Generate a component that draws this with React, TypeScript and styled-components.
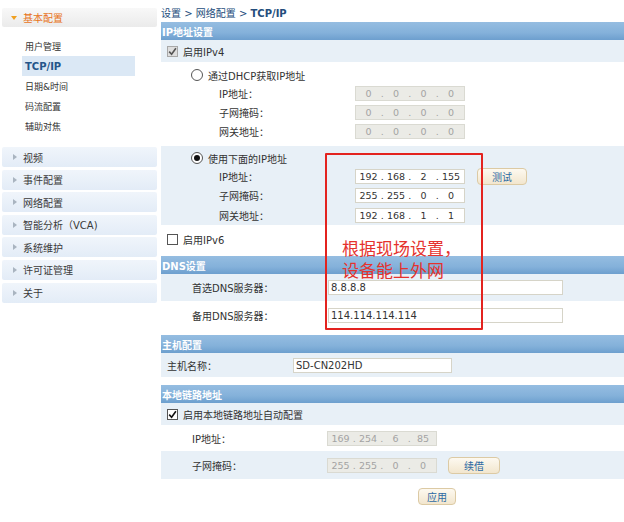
import React from "react";
import styled, { createGlobalStyle } from "styled-components";

const GlobalStyle = createGlobalStyle`
  html, body {
    margin: 0;
    padding: 0;
    background: #fff;
  }
  body {
    font-family: "DejaVu Sans", "Noto Sans CJK SC", sans-serif;
    font-size: 10px;
    color: #333;
  }
`;

const Page = styled.div`
  display: grid;
  grid-template-columns: 157px 463px;
  column-gap: 4px;
  width: 624px;
  height: 522px;
  overflow: hidden;
`;

/* ---------- sidebar ---------- */

const Sidebar = styled.div`
  display: flex;
  flex-direction: column;
  padding: 8px 0 0 2px;
`;

const Arrow = styled.span<{ open?: boolean }>`
  width: 0;
  height: 0;
  flex: none;
  ${({ open }) =>
    open
      ? `border-left: 3px solid transparent;
         border-right: 3px solid transparent;
         border-top: 4px solid #f0a020;
         margin-right: 6px;`
      : `border-top: 3px solid transparent;
         border-bottom: 3px solid transparent;
         border-left: 4px solid #a9b4c0;
         margin-right: 6px;`}
`;

const GroupHead = styled.div<{ open?: boolean }>`
  height: ${({ open }) => (open ? 19 : 20)}px;
  display: flex;
  align-items: center;
  box-sizing: border-box;
  padding-left: ${({ open }) => (open ? 9 : 11)}px;
  margin-bottom: ${({ open }) => (open ? 0 : 2.6)}px;
  border-radius: 2px;
  background: ${({ open }) =>
    open
      ? "linear-gradient(#f8f8f8, #ebebeb)"
      : "linear-gradient(#f0f5fb, #e3ecf7)"};
  color: ${({ open }) => (open ? "#e8731a" : "#3a3a3a")};
  font-size: 10px;
`;

const SubList = styled.div`
  display: flex;
  flex-direction: column;
  padding: 9px 0 11px 0;
`;

const SubItem = styled.div<{ active?: boolean }>`
  height: 20px;
  width: 113px;
  margin-left: 20px;
  padding-left: 3px;
  box-sizing: border-box;
  display: flex;
  align-items: center;
  font-size: ${({ active }) => (active ? 10 : 9)}px;
  font-weight: ${({ active }) => (active ? "bold" : "normal")};
  color: ${({ active }) => (active ? "#24558a" : "#333")};
  background: ${({ active }) => (active ? "#dbe8f5" : "transparent")};
`;

/* ---------- main ---------- */

const Main = styled.div`
  position: relative;
  display: flex;
  flex-direction: column;
`;

const Crumb = styled.div`
  height: 22px;
  box-sizing: border-box;
  padding-top: 5px;
  color: #244d7c;
  font-size: 10px;
  b {
    font-weight: bold;
  }
`;

const SectionHead = styled.div<{ gap?: number }>`
  height: 18px;
  margin-top: ${({ gap }) => gap || 0}px;
  padding-left: 1px;
  display: flex;
  align-items: center;
  color: #fff;
  font-weight: bold;
  font-size: 10px;
  background: linear-gradient(#95bde1 0%, #84b1da 60%, #6d9fce 100%);
`;

const Block = styled.div<{ tint?: boolean; pt?: number; pb?: number }>`
  display: flex;
  flex-direction: column;
  background: ${({ tint }) => (tint ? "#e8f0f7" : "#fff")};
  padding-top: ${({ pt }) => pt || 0}px;
  padding-bottom: ${({ pb }) => pb || 0}px;
`;

const Row = styled.div<{ h: number; pl: number; tint?: boolean }>`
  height: ${({ h }) => h}px;
  padding-left: ${({ pl }) => pl}px;
  display: flex;
  align-items: center;
  background: ${({ tint }) => (tint ? "#e8f0f7" : "transparent")};
`;

const Label = styled.span<{ w: number }>`
  width: ${({ w }) => w}px;
  flex: none;
  color: #333;
`;

const Check = styled.span<{ dim?: boolean }>`
  width: 11px;
  height: 11px;
  box-sizing: border-box;
  border: 1px solid ${({ dim }) => (dim ? "#a8a8a8" : "#555")};
  background: ${({ dim }) => (dim ? "#dedede" : "#fff")};
  margin-right: 5px;
  display: flex;
  align-items: center;
  justify-content: center;
  flex: none;
  svg {
    display: block;
  }
`;

const Radio = styled.span<{ checked?: boolean }>`
  width: 12px;
  height: 12px;
  box-sizing: border-box;
  border-radius: 50%;
  border: 1px solid #555;
  background: #fff;
  margin-right: 5px;
  display: flex;
  align-items: center;
  justify-content: center;
  flex: none;
  &::after {
    content: "";
    width: 6px;
    height: 6px;
    border-radius: 50%;
    background: ${({ checked }) => (checked ? "#111" : "transparent")};
  }
`;

const IpBox = styled.div<{ disabled?: boolean }>`
  width: 110px;
  height: 15px;
  box-sizing: border-box;
  padding-left: 2px;
  display: flex;
  align-items: center;
  border: 1px solid ${({ disabled }) => (disabled ? "#dadad2" : "#d6d4c8")};
  background: ${({ disabled }) => (disabled ? "#ebebe6" : "#fff")};
  color: ${({ disabled }) => (disabled ? "#a3a3a3" : "#333")};
  font-size: 9.5px;
`;

const Seg = styled.span`
  width: 21px;
  text-align: center;
`;

const Dot = styled.span`
  width: 6.5px;
  text-align: center;
`;

const TextBox = styled.div<{ w: number }>`
  width: ${({ w }) => w}px;
  height: 15px;
  box-sizing: border-box;
  padding-left: 2px;
  display: flex;
  align-items: center;
  border: 1px solid #d6d4c8;
  background: #fff;
  color: #333;
  font-size: 10px;
`;

const Button = styled.div<{ w: number; ml?: number }>`
  width: ${({ w }) => w}px;
  height: 17px;
  margin-left: ${({ ml }) => ml || 0}px;
  box-sizing: border-box;
  display: flex;
  align-items: center;
  justify-content: center;
  border: 1px solid #dccaa4;
  border-radius: 4px;
  background: linear-gradient(#fdf9f0, #f2e6ce);
  color: #2d6aa3;
  font-size: 10px;
`;

const Footer = styled.div`
  display: flex;
  padding: 9px 0 0 257px;
`;

const Note = styled.div`
  position: absolute;
  left: 164px;
  top: 153px;
  width: 158px;
  height: 177px;
  box-sizing: border-box;
  border: 2px solid #e3231f;
  border-radius: 1px;
  pointer-events: none;
`;

const NoteText = styled.div`
  margin: 82px 0 0 15px;
  font-family: "Noto Sans CJK SC", sans-serif;
  font-size: 17px;
  line-height: 22px;
  color: #e5322d;
`;

/* ---------- helpers ---------- */

const Tick = ({ color }: { color: string }) => (
  <svg width="9" height="9" viewBox="0 0 9 9">
    <path d="M1.2 4.6 L3.6 7.2 L7.9 1.2" fill="none" stroke={color} strokeWidth="1.6" />
  </svg>
);

const Ip = ({ v, disabled }: { v: string; disabled?: boolean }) => {
  const parts = v.split(".");
  return (
    <IpBox disabled={disabled}>
      {parts.map((p, i) => (
        <React.Fragment key={i}>
          <Seg>{p}</Seg>
          {i < parts.length - 1 && <Dot>.</Dot>}
        </React.Fragment>
      ))}
    </IpBox>
  );
};

const menu = ["视频", "事件配置", "网络配置", "智能分析（VCA)", "系统维护", "许可证管理", "关于"];
const subs = ["用户管理", "TCP/IP", "日期&时间", "码流配置", "辅助对焦"];

const App = () => (
  <>
    <GlobalStyle />
    <Page>
      <Sidebar>
        <GroupHead open>
          <Arrow open />
          基本配置
        </GroupHead>
        <SubList>
          {subs.map((s) => (
            <SubItem key={s} active={s === "TCP/IP"}>
              {s}
            </SubItem>
          ))}
        </SubList>
        {menu.map((m) => (
          <GroupHead key={m}>
            <Arrow />
            {m}
          </GroupHead>
        ))}
      </Sidebar>

      <Main>
        <Crumb>
          设置 &gt; 网络配置 &gt; <b>TCP/IP</b>
        </Crumb>

        <SectionHead>IP地址设置</SectionHead>
        <Row h={22} pl={6} tint>
          <Check dim>
            <Tick color="#555" />
          </Check>
          启用IPv4
        </Row>

        <Block pt={4} pb={5}>
          <Row h={18} pl={30}>
            <Radio />
            通过DHCP获取IP地址
          </Row>
          {[
            ["IP地址：", "0.0.0.0"],
            ["子网掩码：", "0.0.0.0"],
            ["网关地址：", "0.0.0.0"],
          ].map(([l, v]) => (
            <Row key={l} h={19} pl={58}>
              <Label w={136}>{l}</Label>
              <Ip v={v} disabled />
            </Row>
          ))}
        </Block>

        <Block tint pt={4}>
          <Row h={16} pl={30}>
            <Radio checked />
            使用下面的IP地址
          </Row>
          <Row h={20} pl={58}>
            <Label w={136}>IP地址：</Label>
            <Ip v="192.168.2.155" />
            <Button w={50} ml={12}>
              测试
            </Button>
          </Row>
          <Row h={19.5} pl={58}>
            <Label w={136}>子网掩码：</Label>
            <Ip v="255.255.0.0" />
          </Row>
          <Row h={19.5} pl={58}>
            <Label w={136}>网关地址：</Label>
            <Ip v="192.168.1.1" />
          </Row>
        </Block>

        <Row h={28} pl={6}>
          <Check />
          启用IPv6
        </Row>

        <SectionHead gap={3}>DNS设置</SectionHead>
        <Row h={27} pl={31} tint>
          <Label w={136}>首选DNS服务器：</Label>
          <TextBox w={235}>8.8.8.8</TextBox>
        </Row>
        <Row h={28} pl={31}>
          <Label w={136}>备用DNS服务器：</Label>
          <TextBox w={235}>114.114.114.114</TextBox>
        </Row>

        <SectionHead gap={6}>主机配置</SectionHead>
        <Row h={24} pl={6} tint>
          <Label w={126}>主机名称：</Label>
          <TextBox w={159}>SD-CN202HD</TextBox>
        </Row>

        <SectionHead gap={8}>本地链路地址</SectionHead>
        <Row h={22} pl={6} tint>
          <Check>
            <Tick color="#111" />
          </Check>
          启用本地链路地址自动配置
        </Row>
        <Row h={26} pl={31}>
          <Label w={135}>IP地址：</Label>
          <Ip v="169.254.6.85" disabled />
        </Row>
        <Row h={28} pl={31} tint>
          <Label w={135}>子网掩码：</Label>
          <Ip v="255.255.0.0" disabled />
          <Button w={52} ml={11}>
            续借
          </Button>
        </Row>

        <Footer>
          <Button w={38}>应用</Button>
        </Footer>

        <Note>
          <NoteText>
            根据现场设置，
            <br />
            设备能上外网
          </NoteText>
        </Note>
      </Main>
    </Page>
  </>
);

export default App;
